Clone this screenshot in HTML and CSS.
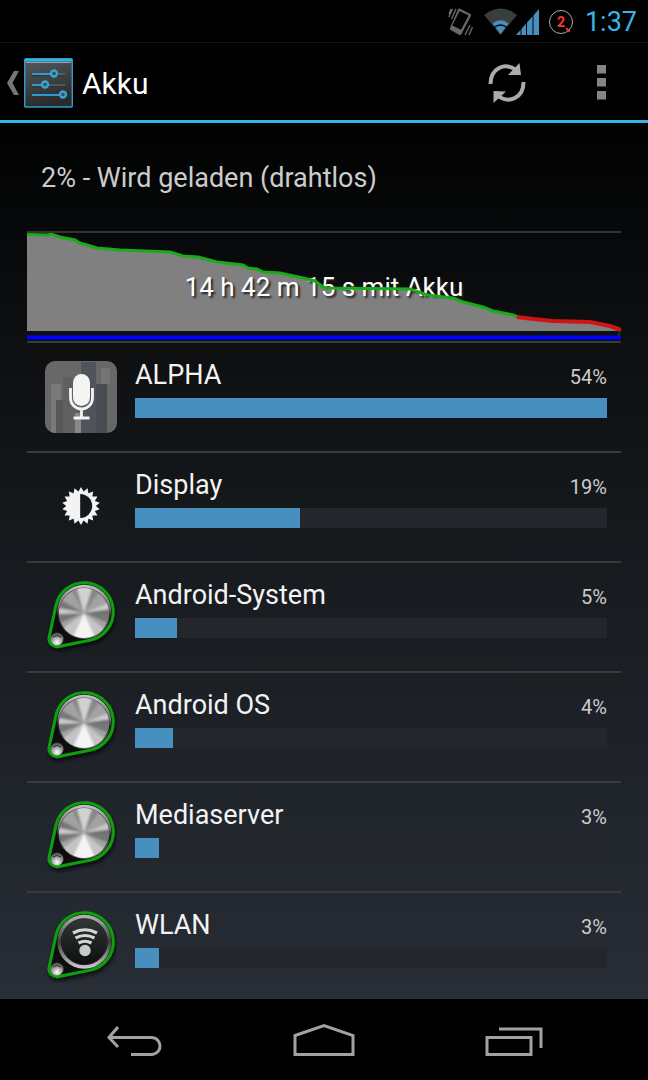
FILE: index.html
```html
<!DOCTYPE html>
<html lang="de">
<head>
<meta charset="utf-8">
<meta name="viewport" content="width=device-width, initial-scale=1">
<title>Akku</title>
<link rel="stylesheet" href="styles.css">
</head>
<body>
<svg class="defs" aria-hidden="true">
  <defs>
    <linearGradient id="rim" x1="0" y1="0" x2="0" y2="1">
      <stop offset="0" stop-color="#c4c4c4"/><stop offset=".45" stop-color="#6e6e6e"/><stop offset=".6" stop-color="#1c1c1c"/><stop offset="1" stop-color="#8a8a8a"/>
    </linearGradient>
    <linearGradient id="wifi-rim" x1="0" y1="0" x2="0" y2="1">
      <stop offset="0" stop-color="#b8b8b8"/><stop offset=".5" stop-color="#3c3c3c"/><stop offset="1" stop-color="#d0d0d0"/>
    </linearGradient>
    <linearGradient id="face" x1="0" y1="0" x2="0" y2="1">
      <stop offset="0" stop-color="#323637"/><stop offset="1" stop-color="#0c0e0f"/>
    </linearGradient>
    <radialGradient id="screw" cx=".5" cy=".75" r=".7">
      <stop offset="0" stop-color="#fff"/><stop offset=".5" stop-color="#aaa"/><stop offset="1" stop-color="#4c4c4c"/>
    </radialGradient>
    <filter id="soft"><feGaussianBlur stdDeviation="1.2"/></filter>
    <filter id="shade" x="-20%" y="-20%" width="140%" height="140%"><feDropShadow dx="1" dy="3" stdDeviation="2" flood-color="#000" flood-opacity=".7"/></filter>
    <clipPath id="disc"><circle cx="39" cy="32" r="25"/></clipPath>
    <clipPath id="tile"><rect width="72" height="72" rx="10"/></clipPath>
    <symbol id="case" viewBox="0 0 72 72">
      <path d="M10.9 24.6A29 29 0 1 1 45.1 59.1L13.6 65.5A8 8 0 0 1 4.2 56Z" fill="#0b0c0d" stroke="#10a010" stroke-width="3" filter="url(#shade)"/>
      <circle cx="12" cy="58" r="6.5" fill="url(#screw)"/>
      <path d="M8 56q4-3 8 0" stroke="#2c2c2c" fill="none"/>
    </symbol>
    <symbol id="knob" viewBox="0 0 72 72">
      <use href="#case"/>
      <circle cx="39.3" cy="30.7" r="27" fill="url(#rim)"/>
      <circle cx="39" cy="32" r="25.5" fill="#4e4e4e"/>
      <g clip-path="url(#disc)">
        <circle cx="39" cy="32" r="25" fill="#a2a2a2"/>
        <g filter="url(#soft)">
          <path d="M39 32L24 4H31ZM39 32L48 4L56 8Z" fill="#888"/>
          <path d="M39 32L31 4H48Z" fill="#d2d2d2"/>
          <path d="M39 32L10 16V26ZM39 32L8 33L10 44ZM39 32L68 32L66 43Z" fill="#777"/>
          <path d="M39 32L8 26V33ZM39 32L68 20V28Z" fill="#c9c9c9"/>
          <path d="M39 32L68 28V32Z" fill="#6c6c6c"/>
          <path d="M39 32L26 60L52 60Z" fill="#f4f4f4"/>
          <path d="M39 32L14 50L26 60ZM39 32L52 60L62 50Z" fill="#c4c4c4"/>
        </g>
      </g>
    </symbol>
  </defs>
</svg>
<div class="screen">
  <div class="status-bar">
    <svg class="vibrate" width="26" height="30" viewBox="0 0 26 30" role="img" aria-label="Vibration">
      <path d="M11.500 1.500L22.500 7Q23.500 7.700 23 8.700L13.500 27Q12.700 28.500 11.500 28L2.500 23Q1.500 22.300 2 21L10 2.500Q10.500 1.300 11.500 1.500Z" fill="#666a68"/>
      <path d="M11.500 4L20.700 8.500L13 22.700L4.300 18.500Z" fill="#020202"/>
      <path d="M.8 10L4.500 2M3.500 12L8 2M1 7L3 2M17 28L22 18M21 28L24.500 20" stroke="#666a68" stroke-width="1.400" fill="none"/>
    </svg>
    <svg class="wifi" width="56" height="28" viewBox="0 0 56 28" role="img" aria-label="WLAN und Mobilfunksignal">
      <path d="M0 7Q16.500-6 33 7L16.500 27Z" fill="#383d3d"/>
      <path d="M8.500 15.500Q16.500 9 24.500 15.500L16.500 26Z" fill="#488fbe"/>
      <path d="M10 19.500Q16.500 14.500 23 19.500" fill="none" stroke="#030303" stroke-width="1.500"/>
      <path d="M32 27L55 1V27Z" fill="#488fbe"/>
      <path d="M37 16V28M42.500 10V28M49 3V28" stroke="#020202" stroke-width="1"/>
    </svg>
    <span class="battery"><span class="battery-level">2</span>
      <svg class="battery-mark" width="4" height="4" viewBox="0 0 4 4" aria-hidden="true"><path d="M0 0L4 4" stroke="#f33" stroke-width="2"/></svg>
    </span>
    <time class="clock">1:37</time>
  </div>
  <header class="action-bar">
    <a class="up" href="#" aria-label="Zurück zu Einstellungen">
      <svg width="12" height="24" viewBox="0 0 12 24"><path d="M7 0H12L5.500 12L12 24H7L0 12Z" fill="#777"/></svg>
      <svg width="49" height="50" viewBox="0 0 49 50">
        <defs><linearGradient id="panel" x1="0" y1="0" x2=".3" y2="1"><stop offset="0" stop-color="#555b60"/><stop offset="1" stop-color="#272b2a"/></linearGradient></defs>
        <rect x=".7" y="1" width="47.600" height="48" rx="1" fill="url(#panel)" stroke="#329bca" stroke-width="1.400"/>
        <path d="M1 2H48" stroke="#33b5e5" stroke-width="3"/><path d="M2 4.500H47" stroke="#99a2a7"/>
        <path d="M8 17.500H41M8 28.500H41" stroke="#30363a" stroke-width="2"/>
        <path d="M27 16H41M18 27H41" stroke="#72777b" stroke-width="1"/>
        <path d="M8 16H27M8 27H18M8 37H36" stroke="#3498d0" stroke-width="2"/>
        <g fill="#42484c" stroke="#3ba2d8" stroke-width="2.400"><circle cx="30" cy="15.500" r="3"/><circle cx="21" cy="26.500" r="3"/><circle cx="39" cy="36.500" r="3"/></g>
      </svg>
    </a>
    <h1 class="title">Akku</h1>
    <button class="action" type="button" aria-label="Aktualisieren">
      <svg width="38" height="40" viewBox="0 0 38 40" fill="none" stroke="#aaaca8" stroke-width="4">
        <path d="M2.500 21C2.500 5 17-1 28 7"/><path d="M35.500 19C35.500 35 21 41 10 33"/>
        <path d="M31.500 0L33 12L20 12ZM5.500 40V28L18 28.500Z" fill="#aaaca8" stroke="none"/>
      </svg>
    </button>
    <button class="action" type="button" aria-label="Weitere Optionen">
      <svg width="9" height="35" viewBox="0 0 9 35" fill="#858585"><path d="M0 0H9V8.500H0ZM0 13H9V21.500H0ZM0 26H9V34.500H0Z"/></svg>
    </button>
  </header>
  <main class="content">
    <p class="summary">2% - Wird geladen (drahtlos)</p>
    <section class="history" aria-label="Akkuverlauf">
      <svg class="plot" viewBox="0 2 594 108" preserveAspectRatio="none">
        <path fill="#808080" d="M0 3L23 3L33 6L48 9L53 12L70 17L93 19L143 21L156 25L171 26L190 31L216 34L221 37L230 38L236 41L253 42L276 47L288 50L296 56L300 57L383 58L400 64L426 67L436 71L456 76L466 80L486 84L491 87L506 88L526 90L563 91L583 95L594 99V100H0Z"/>
      </svg>
      <p class="duration">14 h 42 m 15 s mit Akku</p>
      <svg class="plot" viewBox="0 2 594 108" preserveAspectRatio="none" fill="none" stroke-width="3">
        <path stroke="#18ad18" d="M0 3.500L21 4L24 3L33 6L48 9L53 12L70 17L93 19L143 21L156 25L171 26L190 31L216 34L221 37L230 38L236 41L253 42L276 47L288 50L296 56L300 57L383 58L400 64L426 67L436 71L456 76L466 80L486 84L491 86"/>
        <path stroke="#cf1414" stroke-width="4" d="M490 86L506 88L526 90L563 91L583 95L594 99"/>
        <path stroke="#0b690b" stroke-width="1" d="M592 101V105"/>
        <path stroke="#00f" stroke-width="4" d="M0 106.500H594"/>
      </svg>
    </section>
    <ul class="apps">
      <li class="app">
        <svg class="app-icon" viewBox="0 0 72 72" aria-hidden="true">
          <g clip-path="url(#tile)">
            <path fill="#686868" d="M0 0H72V72H0Z"/><path fill="#7a7a7a" d="M6 23H16V72H6Z"/><path fill="#555759" d="M11 39H18V72H11Z"/>
            <path fill="#5e6061" d="M18 16H36V72H18Z"/><path fill="#50545a" d="M36 1H51V72H36Z"/><path fill="#484c51" d="M51 23H62V72H51Z"/>
            <path fill="#747474" d="M56 7H65V23H56Z"/><path fill="#898989" d="M30 52H36V72H30Z"/>
          </g>
          <rect x="28" y="13" width="17" height="32" rx="8.500" fill="#f4f4f4"/>
          <path d="M25.500 27V37A11 11 0 0 0 47.500 37V27M36.500 48V56M28.500 57H44.500" fill="none" stroke="#f4f4f4" stroke-width="2.800"/>
        </svg>
        <div class="app-body"><span class="app-name">ALPHA</span><span class="app-share">54%</span><div class="bar"><div class="fill" style="width:100%"></div></div></div>
      </li>
      <li class="app">
        <svg class="app-icon" viewBox="-36 -35 72 72" aria-hidden="true">
          <g fill="#f3f3f3">
            <path id="ray" d="M0-19L16.450 9.500H-16.450Z"/><use href="#ray" transform="rotate(20)"/><use href="#ray" transform="rotate(40)"/><use href="#ray" transform="rotate(60)"/><use href="#ray" transform="rotate(80)"/><use href="#ray" transform="rotate(100)"/>
          </g>
          <path d="M-.8-12A12 12 0 0 1-.8 12Z" fill="#15191c"/>
        </svg>
        <div class="app-body"><span class="app-name">Display</span><span class="app-share">19%</span><div class="bar"><div class="fill" style="width:35%"></div></div></div>
      </li>
      <li class="app">
        <svg class="app-icon" viewBox="0 0 72 72" aria-hidden="true"><use href="#knob"/></svg>
        <div class="app-body"><span class="app-name">Android-System</span><span class="app-share">5%</span><div class="bar"><div class="fill" style="width:9%"></div></div></div>
      </li>
      <li class="app">
        <svg class="app-icon" viewBox="0 0 72 72" aria-hidden="true"><use href="#knob"/></svg>
        <div class="app-body"><span class="app-name">Android OS</span><span class="app-share">4%</span><div class="bar"><div class="fill" style="width:8%"></div></div></div>
      </li>
      <li class="app">
        <svg class="app-icon" viewBox="0 0 72 72" aria-hidden="true"><use href="#knob"/></svg>
        <div class="app-body"><span class="app-name">Mediaserver</span><span class="app-share">3%</span><div class="bar"><div class="fill" style="width:5%"></div></div></div>
      </li>
      <li class="app">
        <svg class="app-icon" viewBox="0 0 72 72" aria-hidden="true">
          <use href="#case"/>
          <circle cx="39.300" cy="30.700" r="27" fill="url(#wifi-rim)"/><circle cx="39.300" cy="30.700" r="23" fill="url(#face)" stroke="#222"/>
          <circle cx="40" cy="39.500" r="5.700" fill="#c9c9c9"/>
          <path d="M33.500 32Q40 28.500 46.500 32M30.500 27Q40 22 49.500 27M28 22Q40 15.500 52 22" fill="none" stroke="#d5d5d5" stroke-width="3.200"/>
        </svg>
        <div class="app-body"><span class="app-name">WLAN</span><span class="app-share">3%</span><div class="bar"><div class="fill" style="width:5%"></div></div></div>
      </li>
    </ul>
  </main>
  <nav class="nav-bar" aria-label="Systemnavigation">
    <button class="nav-button" type="button" aria-label="Zurück"><svg width="57" height="34" viewBox="0 0 57 34"><path d="M3 14.500H45C57 14.500 57 31.500 45 31.500H25M12 4L3 14.500L12 24" /></svg></button>
    <button class="nav-button" type="button" aria-label="Startseite"><svg width="62" height="34" viewBox="0 0 62 34"><path d="M2 12.500L31 2.500L60 12.500V31.500H2Z"/></svg></button>
    <button class="nav-button" type="button" aria-label="Letzte Apps"><svg width="58" height="34" viewBox="0 0 58 34"><path d="M2 14.500H46V31.500H2ZM14 6H56V25"/></svg></button>
  </nav>
</div>
</body>
</html>
```
FILE: styles.css
```css
* { box-sizing: border-box; }
body { margin: 0; background: #000; color: #f3f3f3; font-family: Roboto, "Noto Sans", sans-serif; }
svg { display: block; flex: none; }
button { margin: 0; padding: 0; border: 0; background: none; cursor: pointer; }
.defs { position: absolute; width: 0; height: 0; }
.screen {
  display: flex; flex-direction: column; height: 100vh;
  background: linear-gradient(#000 0, #000 8%, #14171a 45%, #282d36 92%);
}
.status-bar {
  display: flex; flex: none; align-items: center; justify-content: flex-end;
  height: 43px; padding: 1px 11px 0 0; background: #000; border-bottom: 1px solid #151515;
}
.vibrate { margin-right: 10px; }
.battery {
  position: relative; display: flex; align-items: center; justify-content: center;
  width: 24px; height: 24px; margin: 0 12px 0 9px;
  border: 1px solid #aaa; border-radius: 50%;
}
.battery-level { color: #f33; font-size: 14px; line-height: 16px; font-weight: 700; }
.battery-mark { position: absolute; right: 2px; bottom: 1px; }
.clock { color: #33b5e5; font-size: 27px; line-height: 32px; }
.action-bar { display: flex; flex: none; align-items: center; height: 80px; padding-top: 2px; border-bottom: 3px solid #33b5e5; }
.up { display: flex; align-items: center; gap: 5px; padding-left: 7px; }
.title { flex: 1; margin: 0; padding: 2px 0 0 9px; color: #fff; font-size: 30px; line-height: 36px; font-weight: 400; }
.action { display: flex; align-items: center; justify-content: center; width: 94px; height: 75px; }
.content { flex: 1; min-height: 0; padding: 0 27px; overflow-y: auto; scrollbar-width: none; }
.summary { margin: 0; padding: 39px 14px 37px; color: #ccc; font-size: 27px; line-height: 32px; }
.history { display: grid; height: 110px; border-top: 2px solid #303434; }
.plot { grid-area: 1 / 1; width: 100%; height: 108px; }
.duration {
  grid-area: 1 / 1; place-self: center; margin: 0; color: #fff;
  font-size: 26px; line-height: 32px; text-shadow: 2px 2px 2px #222;
}
.apps { margin: 0; padding: 0; list-style: none; }
.app { display: flex; gap: 18px; height: 110px; padding: 16px 14px 0 18px; border-top: 2px solid #383b3e; }
.app-icon { width: 72px; height: 72px; margin-top: 2px; overflow: visible; }
.app-body { display: grid; flex: 1; grid-template-columns: 1fr auto; align-content: start; align-items: baseline; }
.app-name { font-size: 27px; line-height: 32px; }
.app-share { color: #ccc; font-size: 20px; line-height: 32px; }
.bar { grid-column: 1 / -1; height: 20px; margin-top: 5px; background: #25262b; }
.fill { height: 100%; background: #468fbe; }
.nav-bar { display: flex; flex: none; justify-content: center; height: 81px; background: #000; }
.nav-button { display: flex; flex: 0 1 190px; align-items: center; justify-content: center; }
.nav-button path { fill: none; stroke: #a2a2a2; stroke-width: 3; }
```
